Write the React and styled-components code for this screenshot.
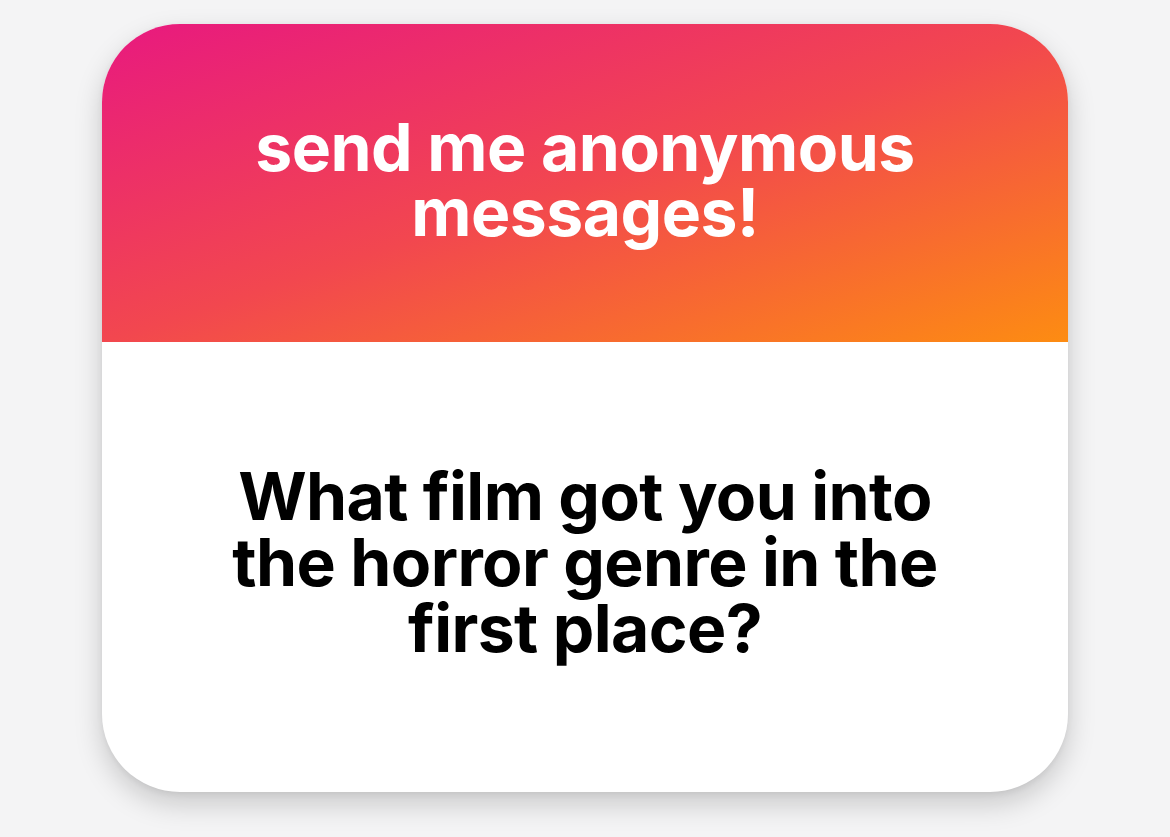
import styled, { createGlobalStyle } from 'styled-components';

const GlobalStyle = createGlobalStyle`
  html, body {
    margin: 0;
    padding: 0;
    background: #f4f4f5;
  }
  body {
    font-family: Inter, "Liberation Sans", Arial, sans-serif;
    -webkit-font-smoothing: antialiased;
  }
`;

export default function App() {
  return (
    <Page>
      <GlobalStyle />
      <Card>
        <Header>
          <HeaderTitle>send me anonymous messages!</HeaderTitle>
        </Header>
        <Body>
          <Question>What film got you into the horror genre in the first place?</Question>
        </Body>
      </Card>
    </Page>
  );
}

const Page = styled.div`
  min-height: 837px;
  display: flex;
  justify-content: center;
  align-items: flex-start;
  padding-top: 24px;
  box-sizing: border-box;
`;

const Card = styled.div`
  width: 966px;
  height: 768px;
  border-radius: 78px;
  overflow: hidden;
  background: #ffffff;
  box-shadow: 0 12px 28px rgba(0, 0, 0, 0.18), 0 2px 6px rgba(0, 0, 0, 0.06);
  display: flex;
  flex-direction: column;
`;

const Header = styled.div`
  height: 318px;
  flex-shrink: 0;
  background: linear-gradient(to bottom right, #e8197f 0%, #f2474f 50%, #fd8c12 100%);
  display: flex;
  align-items: center;
  justify-content: center;
  padding-bottom: 6px;
  box-sizing: border-box;
`;

const HeaderTitle = styled.h1`
  margin: 0;
  width: 760px;
  text-align: center;
  color: #ffffff;
  font-size: 66px;
  line-height: 65px;
  font-weight: 700;
  letter-spacing: -0.5px;
`;

const Body = styled.div`
  flex: 1;
  display: flex;
  align-items: center;
  justify-content: center;
  padding-bottom: 10px;
`;

const Question = styled.p`
  margin: 0;
  width: 760px;
  text-align: center;
  color: #000000;
  font-size: 66px;
  line-height: 66px;
  font-weight: 700;
  letter-spacing: -0.6px;
`;
